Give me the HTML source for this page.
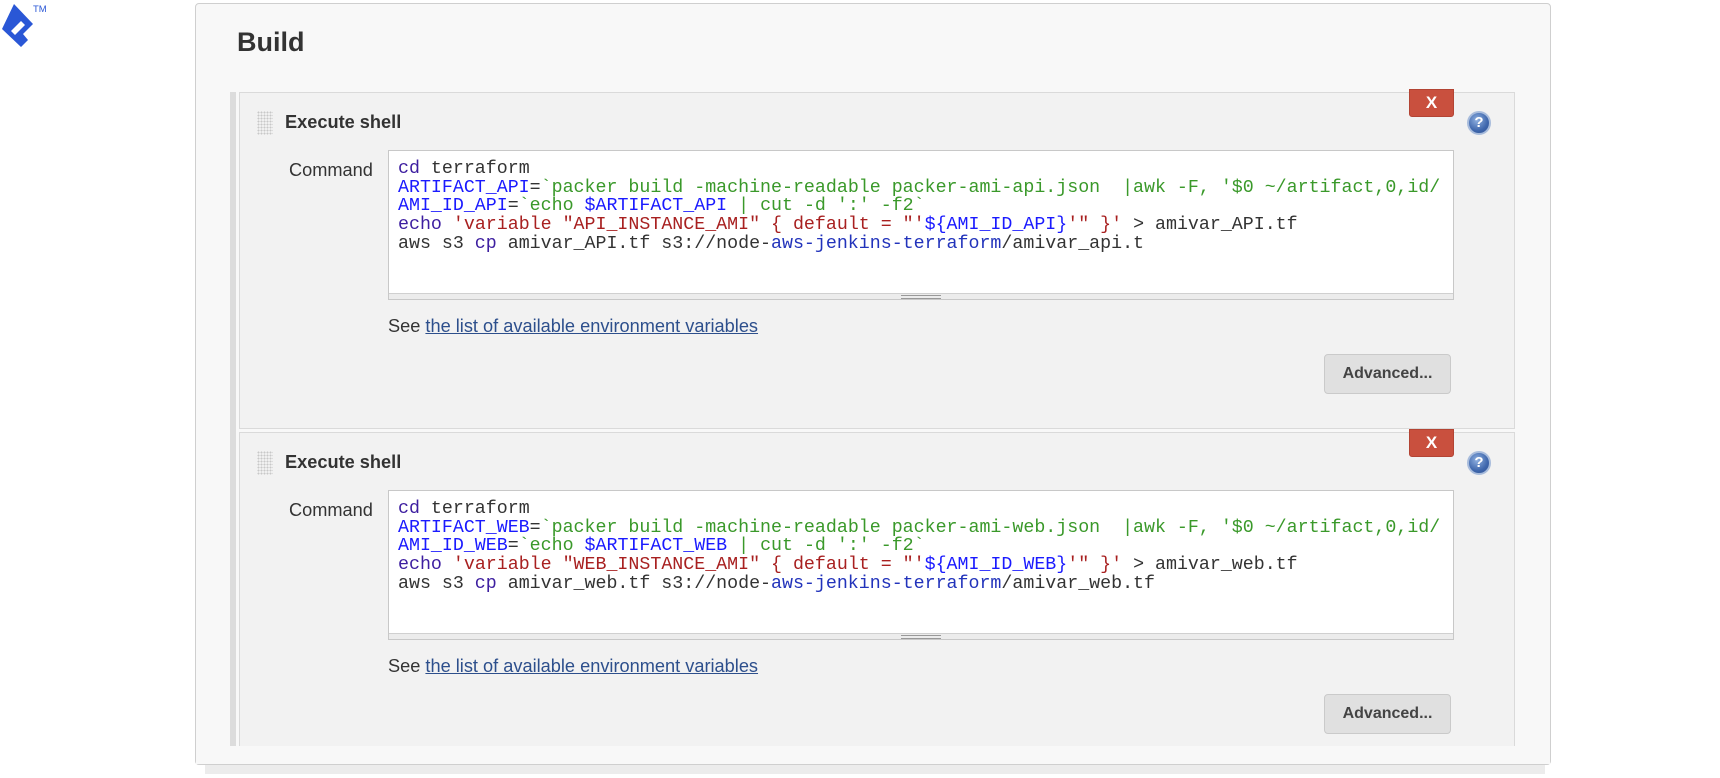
<!DOCTYPE html>
<html><head><meta charset="utf-8"><style>
*{box-sizing:border-box;margin:0;padding:0}
body{width:1720px;height:778px;background:#fff;position:relative;overflow:hidden;font-family:"Liberation Sans",Arial,sans-serif;color:#333}
.abs{position:absolute}
.panel{left:195px;top:3px;width:1356px;height:762px;background:#f8f8f8;border:1px solid #cfcfcf;border-radius:4px}
.shadow{left:205px;top:764px;width:1340px;height:10px;background:#ececec}
h1{position:absolute;left:237px;top:27px;font-size:27px;font-weight:bold;color:#333}
.bar{left:230px;top:92px;width:6px;height:654px;background:#dcdcdc}
.box{left:239px;width:1276px;background:#f2f2f2;border:1px solid #dadada}
.grip{width:16px;height:24px;background-image:radial-gradient(circle,#c8c8c8 0.9px,transparent 1.1px);background-size:3px 3px}
.title{font-size:18.2px;font-weight:bold;color:#333}
.lbl{font-size:18.2px;color:#333}
.ta{left:388px;width:1066px;height:150px;background:#fff;border:1px solid #c8c8c8;overflow:hidden}
.code{position:absolute;left:9px;top:9px;font-family:"Liberation Mono","Courier New",monospace;font-size:18.3px;line-height:18.7px;white-space:pre;color:#333}
.rs{position:absolute;left:0;right:0;bottom:0;height:6px;background:#ececec;border-top:1px solid #d0d0d0}
.rs:after{content:"";position:absolute;left:50%;margin-left:-20px;top:1px;width:40px;height:2px;border-top:1px solid #999;border-bottom:1px solid #999}
.k{color:#3d1ea0}.v{color:#1a1aff}.g{color:#3a992a}.r{color:#a82020}.b{color:#2233bb}
.see{left:388px;font-size:18.2px;color:#333}
.see a{color:#2d4f8c;text-decoration:underline}
.x{left:1409px;width:45px;height:28px;background:#c9503e;border:1px solid #b34434;border-radius:0 0 3px 3px;color:#fff;font-weight:bold;font-size:17px;text-align:center;line-height:26px}
.help{left:1467px;width:24px;height:24px;border-radius:50%;background:radial-gradient(circle at 40% 35%,#8fb0e0,#3f67ad 60%,#2d4f90);border:2px solid #a8bcdc;color:#fff;font-weight:bold;font-size:15px;text-align:center;line-height:20px}
.adv{left:1324px;width:127px;height:40px;background:#e0e0e0;border:1px solid #cacaca;border-radius:4px;font-weight:bold;font-size:16px;color:#444;text-align:center;line-height:38px}
</style></head><body>
<svg class="abs" style="left:0;top:0" width="56" height="56" viewBox="0 0 56 56">
<path d="M14 4 L33 24 L23 34 L28 40 L21 47 L2 29 Z" fill="#2a57d6"/>
<path d="M11 31 L21 21 L25 25 L15 35 Z" fill="#fff"/>
<text x="33" y="12" font-size="9.5" fill="#2a57d6" font-family="Liberation Sans">TM</text>
</svg>
<div class="abs shadow"></div>
<div class="abs panel"></div>
<h1>Build</h1>
<div class="abs bar"></div>

<div class="abs box" style="top:92px;height:337px"></div>
<div class="abs grip" style="left:257px;top:111px"></div>
<div class="abs title" style="left:285px;top:112px">Execute shell</div>
<div class="abs x" style="top:89px">X</div>
<div class="abs help" style="top:111px">?</div>
<div class="abs lbl" style="left:289px;top:160px">Command</div>
<div class="abs ta" style="top:150px"><div class="code"><span class="k">cd</span> terraform
<span class="v">ARTIFACT_API</span>=<span class="g">`packer build -machine-readable packer-ami-api.json  |awk -F, '$0 ~/artifact,0,id/</span>
<span class="v">AMI_ID_API</span>=<span class="g">`echo </span><span class="v">$ARTIFACT_API</span><span class="g"> | cut -d ':' -f2`</span>
<span class="k">echo</span> <span class="r">'variable "API_INSTANCE_AMI" { default = "'</span><span class="v">${AMI_ID_API}</span><span class="r">'" }'</span> &gt; amivar_API.tf
aws s3 <span class="k">cp</span> amivar_API.tf s3://node-<span class="b">aws-jenkins-terraform</span>/amivar_api.t</div><div class="rs"></div></div>
<div class="abs see" style="top:316px">See <a>the list of available environment variables</a></div>
<div class="abs adv" style="top:354px">Advanced...</div>

<div class="abs box" style="top:432px;height:330px;border-bottom:none"></div>
<div class="abs grip" style="left:257px;top:451px"></div>
<div class="abs title" style="left:285px;top:452px">Execute shell</div>
<div class="abs x" style="top:429px">X</div>
<div class="abs help" style="top:451px">?</div>
<div class="abs lbl" style="left:289px;top:500px">Command</div>
<div class="abs ta" style="top:490px"><div class="code"><span class="k">cd</span> terraform
<span class="v">ARTIFACT_WEB</span>=<span class="g">`packer build -machine-readable packer-ami-web.json  |awk -F, '$0 ~/artifact,0,id/</span>
<span class="v">AMI_ID_WEB</span>=<span class="g">`echo </span><span class="v">$ARTIFACT_WEB</span><span class="g"> | cut -d ':' -f2`</span>
<span class="k">echo</span> <span class="r">'variable "WEB_INSTANCE_AMI" { default = "'</span><span class="v">${AMI_ID_WEB}</span><span class="r">'" }'</span> &gt; amivar_web.tf
aws s3 <span class="k">cp</span> amivar_web.tf s3://node-<span class="b">aws-jenkins-terraform</span>/amivar_web.tf</div><div class="rs"></div></div>
<div class="abs see" style="top:656px">See <a>the list of available environment variables</a></div>
<div class="abs adv" style="top:694px">Advanced...</div>
<div class="abs" style="left:196px;top:746px;width:1354px;height:18px;background:#f8f8f8"></div>
</body></html>
